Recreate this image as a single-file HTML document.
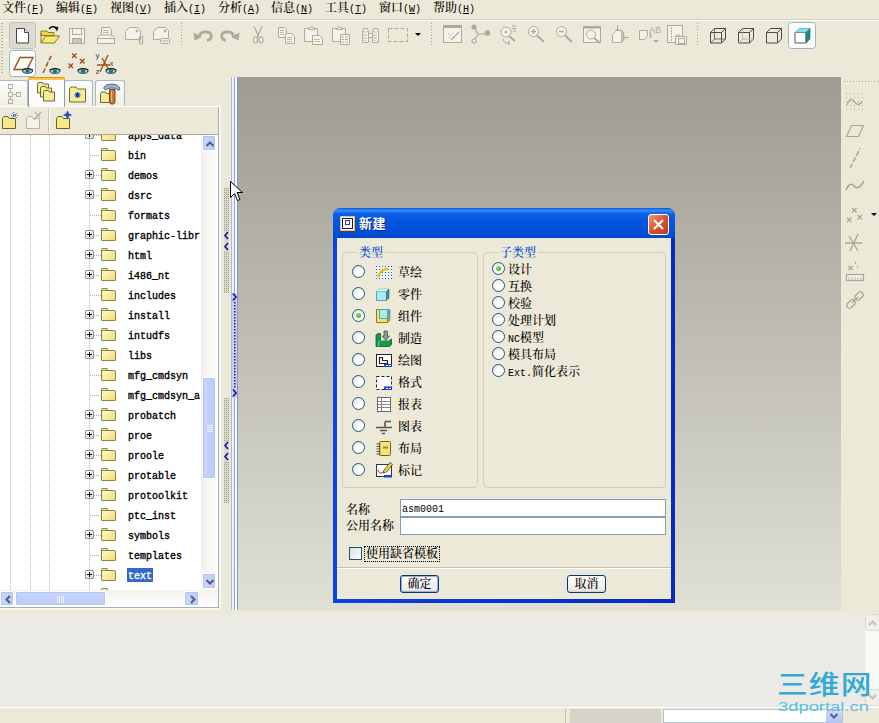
<!DOCTYPE html>
<html><head><meta charset="utf-8">
<style>
html,body{margin:0;padding:0;}
body{width:879px;height:723px;overflow:hidden;background:#ece9d8;position:relative;
 font-family:"Liberation Serif","Noto Serif CJK SC",serif;font-size:12px;font-weight:500;color:#000;}
.abs{position:absolute;}
.menu span{position:absolute;top:0px;white-space:nowrap;font-size:12px;line-height:16px;}
.menu u{text-decoration:underline;}
.menu b{font-weight:normal;font-family:"Liberation Mono",monospace;font-size:10px;}
#gfx{left:238px;top:77px;width:603px;height:534px;background:linear-gradient(#9e9c92,#e1e0d4);}
#msg{left:0;top:614px;width:879px;height:93px;background:#ebeae4;}
#status{left:0;top:707px;width:879px;height:16px;background:#ece9d8;border-top:1px solid #fff;}
.mono{font-family:"Liberation Mono",monospace;font-size:10px;}

.tab{background:linear-gradient(#fdfdfb,#f1efe4);border:1px solid #a9b7c9;border-bottom:none;border-radius:3px 3px 0 0;box-sizing:border-box}
#tree .row{position:absolute;left:0;width:201px;height:20px;}
#tree .row:before{content:"";position:absolute;left:90px;top:8px;width:11px;height:1px;background:repeating-linear-gradient(90deg,#b8b5a8 0 1px,#fff 1px 2px)}
#tree .vd{position:absolute;top:0;width:1px;height:455px;background:repeating-linear-gradient(#b8b5a8 0 1px,#fff 1px 2px);}
.pm{position:absolute;left:85px;top:3px;width:9px;height:9px;box-sizing:border-box;border:1px solid #8b9aa8;border-radius:1px;background:linear-gradient(135deg,#fff,#d9d6c8);}
.pm:before{content:"";position:absolute;left:1px;top:3px;width:5px;height:1px;background:#000}
.pm:after{content:"";position:absolute;left:3px;top:1px;width:1px;height:5px;background:#000}
.fd{position:absolute;left:101px;top:1px;width:15px;height:13px;}
.fd:before{content:"";position:absolute;left:0;top:0;width:7px;height:4px;border:1px solid #8a8440;border-bottom:none;border-radius:2px 2px 0 0;background:#f7efa6;box-sizing:border-box}
.fd:after{content:"";position:absolute;left:0;top:2px;width:15px;height:11px;border:1px solid #8a8440;border-radius:1px 2px 1px 1px;background:linear-gradient(135deg,#fdf8c4,#efe07c);box-sizing:border-box}
.nm{position:absolute;left:127px;top:2px;height:16px;line-height:16px;padding:0 1px;font-family:"Liberation Mono",monospace;font-size:10px;font-weight:normal;-webkit-text-stroke:0.35px #000;white-space:pre;color:#000}
.nm.sel{background:#316ac5;color:#fff;-webkit-text-stroke:0.35px #fff;top:1px;height:14px;line-height:18px;overflow:visible}
.sbtn{box-sizing:border-box;border:1px solid #fff;border-radius:2px;background:linear-gradient(90deg,#cbd7fc,#bdcbf7);box-shadow:0 0 0 1px #b5c4ee inset}

#dlg .grp{position:absolute;box-sizing:border-box;border:1px solid #d0d0bf;border-radius:4px}
#dlg .gl{position:absolute;background:#ece9d8;color:#0046d5;font-size:12px;line-height:16px;margin-top:1px;padding:0 2px;white-space:nowrap}
#dlg .lb{position:absolute;font-size:12px;line-height:16px;white-space:nowrap;margin-top:1px;margin-left:-1px}
#dlg .rd{position:absolute;width:13px;height:13px;box-sizing:border-box;border:1px solid #21557f;border-radius:50%;background:radial-gradient(circle at 65% 65%,#fff 30%,#dcdcd7)}
#dlg .rd.on:after{content:"";position:absolute;left:3px;top:3px;width:5px;height:5px;border-radius:50%;background:radial-gradient(circle at 35% 35%,#8fe070,#21a121)}
#dlg .inp{position:absolute;box-sizing:border-box;border:1px solid #7f9db9;background:#fff}
#dlg .btn{position:absolute;width:39px;height:18px;box-sizing:border-box;border:1px solid #003c74;border-radius:3px;background:linear-gradient(#fff,#ecebe5 85%,#d6d0c5);text-align:center;font-size:12px;line-height:17px}
</style></head><body>
<!-- menu -->
<div class="abs menu" style="left:0;top:0;width:879px;height:19px;">
<span style="left:2px">文件<b>(<u>F</u>)</b></span>
<span style="left:56px">编辑<b>(<u>E</u>)</b></span>
<span style="left:110px">视图<b>(<u>V</u>)</b></span>
<span style="left:164px">插入<b>(<u>I</u>)</b></span>
<span style="left:218px">分析<b>(<u>A</u>)</b></span>
<span style="left:271px">信息<b>(<u>N</u>)</b></span>
<span style="left:325px">工具<b>(<u>T</u>)</b></span>
<span style="left:379px">窗口<b>(<u>W</u>)</b></span>
<span style="left:433px">帮助<b>(<u>H</u>)</b></span>
</div>
<div class="abs" style="left:0;top:19px;width:879px;height:1px;background:#d8d2bd"></div>
<div class="abs" style="left:0;top:20px;width:879px;height:1px;background:#fff"></div>


<!-- toolbars -->
<svg class="abs" style="left:0;top:21px" width="879" height="57" viewBox="0 21 879 57" shape-rendering="auto">
<!-- grip dots -->
<g fill="#b5b09c">
<path d="M1,23h2v1h-2zM1,26h2v1h-2zM1,29h2v1h-2zM1,32h2v1h-2zM1,35h2v1h-2zM1,38h2v1h-2zM1,41h2v1h-2zM1,44h2v1h-2zM1,47h2v1h-2zM1,51h2v1h-2zM1,54h2v1h-2zM1,57h2v1h-2zM1,60h2v1h-2zM1,63h2v1h-2zM1,66h2v1h-2zM1,69h2v1h-2zM1,72h2v1h-2z"/>
</g>
<g stroke="#a9a592" stroke-width="1" stroke-dasharray="1 2">
<path d="M181.5,23v24M431.5,23v24M697.5,23v24"/>
</g>
<!-- New (pressed) -->
<rect x="9.5" y="22.5" width="26" height="26" rx="3" fill="#dddbd1" stroke="#c4c2b6"/>
<path d="M16.5,28.5h8l4,4v10.5h-12z" fill="#fff" stroke="#444" stroke-width="1"/>
<path d="M24.5,28.5v4h4" fill="#e8e8e8" stroke="#444" stroke-width="1"/>
<!-- Open -->
<path d="M41,31h6l1,1.5h6v3h-13z" fill="#e8d84e" stroke="#8a7a20" stroke-width="1"/>
<path d="M41,43V33M41,43l4.5,-7h14l-5,7z" fill="#f5ea6a" stroke="#8a7a20" stroke-width="1"/>
<path d="M49,29q3,-4 7,-1" fill="none" stroke="#111" stroke-width="1.4"/><path d="M54,26.500l4.500,0.500l-1.500,4.500z" fill="#111"/>
<!-- Save disabled -->
<g fill="none" stroke="#aeab9d" stroke-width="1">
<rect x="69.500" y="28.500" width="15" height="15" fill="#f4f2ea"/>
<rect x="72.500" y="28.500" width="9" height="6"/>
<rect x="72.500" y="38.500" width="9" height="5" fill="#c9c6b9"/>
</g>
<!-- Print disabled -->
<g fill="#f4f2ea" stroke="#aeab9d" stroke-width="1">
<path d="M101.500,36.500v-9h8l2,2v7z"/>
<path d="M97.500,43.500v-6l2.500,-2.500h12l2.500,2.500v6z"/>
<path d="M97.500,38.500h17" fill="none"/>
<path d="M103,30.500h6M103,32.500h6" fill="none" stroke-width="0.8"/>
</g>
<!-- tag1 disabled -->
<g fill="#f4f2ea" stroke="#aeab9d" stroke-width="1">
<path d="M125.500,39.500v-8l4,-4h8l3,3v9z"/>
<circle cx="137" cy="31" r="1" fill="#aeab9d"/>
<path d="M139.500,36.500v6a1.500,1.500 0 0 0 3,0v-7" fill="none" stroke-width="1.200"/>
</g>
<!-- tag2 disabled -->
<g fill="#f4f2ea" stroke="#aeab9d" stroke-width="1">
<path d="M153.500,39.500v-8l4,-4h8l3,3v9z"/>
<circle cx="165" cy="31" r="1" fill="#aeab9d"/>
<rect x="160.500" y="38.500" width="9" height="5" rx="1"/>
<path d="M162,41h6" fill="none"/>
</g>
<!-- undo / redo disabled -->
<g><path d="M199.500,36.500Q200,31.800 205.500,31.800Q211.300,31.800 211.300,36Q211.300,39.800 207,40.300" fill="none" stroke="#aeab9d" stroke-width="2.800"/><path d="M193.500,32.500l1,8l7.500,-3.500z" fill="#aeab9d"/></g>
<g transform="translate(433,0) scale(-1,1)"><path d="M199.500,36.500Q200,31.800 205.500,31.800Q211.300,31.800 211.300,36Q211.300,39.800 207,40.300" fill="none" stroke="#aeab9d" stroke-width="2.800"/><path d="M193.500,32.500l1,8l7.500,-3.500z" fill="#aeab9d"/></g>
<!-- scissors disabled -->
<g fill="none" stroke="#aeab9d" stroke-width="1.200">
<path d="M254,26.500l5,11M262,26.500l-5,11"/>
<ellipse cx="255.500" cy="40" rx="2" ry="3" fill="#f4f2ea"/><ellipse cx="261" cy="40" rx="2" ry="3" fill="#f4f2ea"/>
</g>
<!-- copy disabled -->
<g fill="#f4f2ea" stroke="#aeab9d" stroke-width="1">
<path d="M278.500,37.500v-10h6l2,2v8z"/>
<path d="M285.500,43.500v-10h6l3,3v7z"/>
<path d="M280,30.500h4M280,32.500h4M280,34.500h4M287,37.500h5M287,39.500h5M287,41.500h5" fill="none" stroke-width="0.800"/>
</g>
<!-- paste disabled -->
<g fill="#f4f2ea" stroke="#aeab9d" stroke-width="1">
<path d="M304.500,41.500v-13h13v13z"/>
<path d="M308.500,29.500l1.500,-2.500h3l1.500,2.500z"/>
<path d="M312.500,44.500v-9h7l3,3v6z"/>
<path d="M314,39.500h6M314,41.500h6" fill="none" stroke-width="0.800"/>
</g>
<!-- paste special disabled -->
<g fill="#f4f2ea" stroke="#aeab9d" stroke-width="1">
<path d="M332.500,41.500v-13h13v13z"/>
<path d="M336.500,29.500l1.500,-2.500h3l1.500,2.500z"/>
<path d="M340.500,44.500v-10h9v10z"/>
<path d="M342,37h2M345,37h3M342,39.500h2M345,39.500h3M342,42h2M345,42h3" fill="none"/>
</g>
<!-- binoculars disabled -->
<g fill="#f4f2ea" stroke="#aeab9d" stroke-width="1">
<path d="M362.500,42.500v-10l1,-4h4l1,4v10z"/>
<path d="M372.500,42.500v-10l1,-4h4l1,4v10z"/>
<path d="M368.500,33.500h4v4h-4z"/>
<path d="M364,31v10M366,31v10M374,31v10M376,31v10" fill="none" stroke-dasharray="2 1" stroke-width="0.800"/>
</g>
<!-- selection rect disabled -->
<rect x="388.500" y="28.500" width="19" height="13" fill="none" stroke="#aeab9d" stroke-dasharray="4 2"/>
<path d="M415,33h6l-3,3z" fill="#000"/>
<!-- icon: window w/ spray -->
<g fill="none" stroke="#aeab9d" stroke-width="1">
<rect x="443.500" y="25.500" width="18" height="17" fill="#f4f2ea"/>
<path d="M443.500,27h18" stroke-width="2"/>
<path d="M451,40l8,-8" stroke-width="1.500"/>
<path d="M448,33l1,1M450,35l1,1M452,33l1,1M449,37l1,1" />
</g>
<!-- branch icon -->
<g fill="none" stroke="#aeab9d" stroke-width="1.200">
<path d="M474,27q3,7 5,7h8M479,34q-3,2 -5,7"/>
<circle cx="474" cy="27" r="2" fill="#aeab9d"/><circle cx="487.500" cy="33" r="2.200" fill="#aeab9d"/><circle cx="474" cy="41" r="2" fill="#f4f2ea"/>
</g>
<!-- spin icon -->
<g fill="none" stroke="#aeab9d" stroke-width="1">
<circle cx="506" cy="32" r="5" fill="#f4f2ea"/><circle cx="506" cy="32" r="1" fill="#aeab9d"/>
<path d="M509,36l6,5" stroke-width="2"/>
<path d="M512,26h4M512,28.500h4M513,31h3"/>
<path d="M503,39q1,5 6,4" /><path d="M508,41l2,2l-2,2" />
</g>
<!-- zoom in -->
<g fill="none" stroke="#aeab9d" stroke-width="1">
<circle cx="533.500" cy="31.500" r="5" fill="#f4f2ea"/>
<path d="M531,31.500h5M533.500,29v5" stroke-width="1.500"/>
<path d="M537,35.500l7,6.500" stroke-width="2"/>
</g>
<!-- zoom out -->
<g fill="none" stroke="#aeab9d" stroke-width="1">
<circle cx="561.500" cy="31.500" r="5" fill="#f4f2ea"/>
<path d="M559,31.500h5" stroke-width="1.500"/>
<path d="M565,35.500l7,6.500" stroke-width="2"/>
</g>
<!-- refit -->
<g fill="none" stroke="#aeab9d" stroke-width="1">
<rect x="583.500" y="26.500" width="17" height="16" fill="#f4f2ea"/><path d="M583.500,27.500h17" stroke-width="2"/>
<circle cx="591" cy="34.500" r="4.500"/>
<path d="M594,38l6,5" stroke-width="2"/>
</g>
<!-- orient -->
<g fill="none" stroke="#aeab9d" stroke-width="1">
<path d="M612.500,42.500v-8l4,-4h5v12z" fill="#f4f2ea"/>
<path d="M621.500,30.500l2,2v8l-2,2" fill="#c9c6b9"/>
<path d="M617.500,25v6M615.500,29l2,2l2,-2M629,37.500h-6M625,35.500l-2,2l2,2"/>
</g>
<!-- named views -->
<g fill="none" stroke="#aeab9d" stroke-width="1">
<path d="M639.500,39.500v-9h8v5l-3,4z" fill="#f4f2ea"/>
<text x="649" y="32.500" font-family="Liberation Sans,sans-serif" font-size="9" fill="#aeab9d" stroke="none">AB</text>
<path d="M650.500,33v5" stroke-width="1.500"/>
<path d="M653,40h6l-3,3z" fill="#aeab9d" stroke="none"/>
</g>
<!-- layers -->
<g fill="none" stroke="#aeab9d" stroke-width="1">
<rect x="667.500" y="25.500" width="15" height="17" fill="#f4f2ea"/>
<path d="M671.500,27v15" stroke-dasharray="2 1"/>
<rect x="675.500" y="36.500" width="11" height="8" fill="#f4f2ea"/>
<rect x="678.500" y="38.500" width="6" height="5"/>
<path d="M675.500,36.500l1,-1.500h3l1,1.500"/>
</g>
<!-- cubes -->
<g transform="translate(718,36)"><g fill="none" stroke="#3a3a3a" stroke-width="0.900"><path d="M-7.500,-3.500h11v10.500h-11z"/><path d="M-7.500,-3.500l4,-4h11l-4,4M7.500,-7.500v10.500l-4,4"/></g><path d="M-3.500,-7.500v10.500h11M-3.500,3l-4,4" fill="none" stroke="#555" stroke-width="0.800"/></g>
<g transform="translate(746,36)"><g fill="none" stroke="#3a3a3a" stroke-width="0.900"><path d="M-7.500,-3.500h11v10.500h-11z"/><path d="M-7.500,-3.500l4,-4h11l-4,4M7.500,-7.500v10.500l-4,4"/></g><path d="M-3.500,-7.500v10.500h11M-3.500,3l-4,4" fill="none" stroke="#b0b0a8" stroke-width="0.800"/></g>
<g transform="translate(774,36)"><g fill="none" stroke="#3a3a3a" stroke-width="0.900"><path d="M-7.500,-3.500h11v10.500h-11z"/><path d="M-7.500,-3.500l4,-4h11l-4,4M7.500,-7.500v10.500l-4,4"/></g></g>
<rect x="788.500" y="22.500" width="27" height="26" rx="3" fill="#fbfbf8" stroke="#9db4cc"/>
<g transform="translate(802.500,36)">
<path d="M-7.500,-3.500h11v10.500h-11z" fill="#fff" stroke="#444" stroke-width="0.900"/>
<path d="M-7.500,-3.500l4,-4h11l-4,4z" fill="#7fe0e6" stroke="#4a9aa0" stroke-width="0.600"/>
<path d="M3.500,-3.500l4,-4v10.500l-4,4z" fill="#1e8a86" stroke="#1e6a66" stroke-width="0.600"/>
</g>
<!-- Row 2 -->
<rect x="9.500" y="50.500" width="26" height="26" rx="3" fill="#fbfbf8" stroke="#9db4cc"/>
<path d="M14,69.500l6,-12h13l-6,12z" fill="none" stroke="#a0501e" stroke-width="1.400"/>
<g transform="translate(27.500,71)"><ellipse cx="0" cy="0" rx="5" ry="2.300" fill="#9ccac4" stroke="#223" stroke-width="0.900"/><circle cx="0" cy="0" r="2" fill="#0a7a76"/><path d="M-5.500,-1.200 Q0,-4.200 5.500,-1.200" fill="none" stroke="#222" stroke-width="1"/></g>
<path d="M43,73l9,-19" fill="none" stroke="#a0501e" stroke-width="1.500" stroke-dasharray="5 2"/>
<g transform="translate(55,71)"><ellipse cx="0" cy="0" rx="5" ry="2.300" fill="#9ccac4" stroke="#223" stroke-width="0.900"/><circle cx="0" cy="0" r="2" fill="#0a7a76"/><path d="M-5.500,-1.200 Q0,-4.200 5.500,-1.200" fill="none" stroke="#222" stroke-width="1"/></g>
<g fill="none" stroke="#a0501e" stroke-width="1.400">
<path d="M72,53.500l4.500,4.500M76.500,53.500l-4.500,4.500M80,59l4.500,4.500M84.500,59l-4.500,4.500M68.500,63.500l4.500,4.500M73,63.500l-4.500,4.500"/>
</g>
<g transform="translate(83,71)"><ellipse cx="0" cy="0" rx="5" ry="2.300" fill="#9ccac4" stroke="#223" stroke-width="0.900"/><circle cx="0" cy="0" r="2" fill="#0a7a76"/><path d="M-5.500,-1.200 Q0,-4.200 5.500,-1.200" fill="none" stroke="#222" stroke-width="1"/></g>
<g fill="none" stroke="#a0501e" stroke-width="1.400">
<path d="M97,65h13M108,55l-8,17M102,58l7,12"/>
</g>
<g font-family="Liberation Sans,sans-serif" font-size="8" fill="#444"><text x="95.500" y="58">y</text><text x="95.500" y="73.500">z</text><text x="109.500" y="66">x</text></g>
<g transform="translate(111,71)"><ellipse cx="0" cy="0" rx="5" ry="2.300" fill="#9ccac4" stroke="#223" stroke-width="0.900"/><circle cx="0" cy="0" r="2" fill="#0a7a76"/><path d="M-5.500,-1.200 Q0,-4.200 5.500,-1.200" fill="none" stroke="#222" stroke-width="1"/></g>
</svg>


<!-- tabs -->
<div class="abs" style="left:0;top:106px;width:221px;height:1px;background:#fff"></div>
<div class="abs tab" style="left:0;top:80px;width:28px;height:26px;border-left:none;border-radius:0 3px 0 0"></div>
<div class="abs tab" style="left:64px;top:80px;width:29px;height:26px;"></div>
<div class="abs tab" style="left:95px;top:80px;width:30px;height:26px;"></div>
<div class="abs" style="left:28px;top:77px;width:35px;height:30px;background:#fcfcfe;border:1px solid #919b9c;border-bottom:none;border-top:none;border-radius:3px 3px 0 0"></div>
<div class="abs" style="left:28px;top:77px;width:37px;height:3px;background:#ffc73c;border-radius:3px 3px 0 0;border-top:1px solid #e68b2c;box-sizing:border-box"></div>
<svg class="abs" style="left:0;top:77px" width="130" height="60" viewBox="0 77 130 60">
<!-- tree tab icon (disabled) -->
<g fill="#f6f5ee" stroke="#b4b1a3" stroke-width="1"><path d="M10.500,88v13M10.500,94.500h8" fill="none"/><rect x="8.500" y="84.500" width="4" height="4"/><rect x="8.500" y="92.500" width="4" height="4"/><rect x="8.500" y="99.500" width="4" height="4"/><rect x="16.500" y="92.500" width="4" height="4"/></g>
<!-- folders tab icon -->
<g fill="#f5ec96" stroke="#5e5a28" stroke-width="0.900" transform="translate(0,-2.500)">
<path d="M37.500,95.500v-9l1,-1.500h4l1,1.500h5v9z"/>
<path d="M40.500,99.500v-9l1,-1.500h4l1,1.500h5v9z"/>
<path d="M43.500,103.500v-9l1,-1.500h4l1,1.500h5v9z"/>
</g>
<!-- favorites -->
<g transform="translate(0,-2.500)">
<path d="M69.500,104.500v-13l1.500,-2h5l1.500,2h8v13z" fill="#f5ec96" stroke="#5e5a28" stroke-width="0.900"/>
<path d="M77.500,94.500v6M74.500,97.500h6M75.500,95.500l4,4M79.500,95.500l-4,4" stroke="#1030d0" stroke-width="1.100" fill="none"/>
</g>
<!-- connections -->
<path d="M100.500,102.500v-9l1,-1.500h4l1,1.500h4v9z" fill="#f5ec96" stroke="#5e5a28" stroke-width="0.900"/>
<path d="M103.500,88q2,-4 8,-4q6,0 8.500,4l-1,2.500q-3,-3 -7.500,-2.500q-4,0 -6,2z" fill="#9fb6d8" stroke="#33466a" stroke-width="0.800"/>
<path d="M109.500,89.500h5.500v12a2.700,2.700 0 0 1 -5.500,0z" fill="#cf7a2c" stroke="#5a2c0c" stroke-width="0.800"/>
<path d="M111.500,91v10" stroke="#f0b070" stroke-width="1"/>
</svg>
<!-- panel toolbar -->
<div class="abs" style="left:0;top:107px;width:218px;height:27px;background:#ece9d8;border-right:1px solid #c5c2b2"></div>
<div class="abs" style="left:0;top:134px;width:219px;height:1px;background:#aca899"></div>
<div class="abs" style="left:48px;top:109px;width:1px;height:24px;background:#c5c2b2"></div>
<div class="abs" style="left:49px;top:109px;width:1px;height:24px;background:#fff"></div>
<svg class="abs" style="left:0;top:107px" width="100" height="27" viewBox="0 107 100 27">
<path d="M2.500,128.500v-10l1.500,-2h4l1.500,2h6v10z" fill="#f3e88a" stroke="#6b6420"/>
<path d="M14,112v7M11,115.500h7M12,113l5,5M17,113l-5,5" stroke="#1030a0" stroke-width="0.800" fill="none" stroke-dasharray="1 1"/>
<path d="M26.500,128.500v-10l1.500,-2h4l1.500,2h6v10z" fill="#f4f2ea" stroke="#b4b1a3"/>
<path d="M34,120l7,-8M35,112l5,5" stroke="#b4b1a3" stroke-width="1.300" fill="none"/>
<path d="M56.500,128.500v-10l1.500,-2h4l1.500,2h6v10z" fill="#f3e88a" stroke="#6b6420"/>
<path d="M67.500,111l1.200,2.800l2.800,1.200l-2.800,1.200l-1.200,2.800l-1.200,-2.800l-2.800,-1.200l2.800,-1.200z" fill="#2050e0" stroke="#1030a0" stroke-width="0.500"/>
</svg>
<!-- tree -->
<div id="tree" class="abs" style="left:0;top:135px;width:201px;height:455px;background:#fff;overflow:hidden">
<i class="vd" style="left:10px"></i><i class="vd" style="left:30px"></i><i class="vd" style="left:49px"></i><i class="vd" style="left:89px"></i>
<div class="row" style="top:-8px"><i class="pm"></i><i class="fd"></i><span class="nm">apps_data</span></div>
<div class="row" style="top:12px"><i class="fd"></i><span class="nm">bin</span></div>
<div class="row" style="top:32px"><i class="pm"></i><i class="fd"></i><span class="nm">demos</span></div>
<div class="row" style="top:52px"><i class="pm"></i><i class="fd"></i><span class="nm">dsrc</span></div>
<div class="row" style="top:72px"><i class="fd"></i><span class="nm">formats</span></div>
<div class="row" style="top:92px"><i class="pm"></i><i class="fd"></i><span class="nm">graphic-libr</span></div>
<div class="row" style="top:112px"><i class="pm"></i><i class="fd"></i><span class="nm">html</span></div>
<div class="row" style="top:132px"><i class="pm"></i><i class="fd"></i><span class="nm">i486_nt</span></div>
<div class="row" style="top:152px"><i class="fd"></i><span class="nm">includes</span></div>
<div class="row" style="top:172px"><i class="pm"></i><i class="fd"></i><span class="nm">install</span></div>
<div class="row" style="top:192px"><i class="pm"></i><i class="fd"></i><span class="nm">intudfs</span></div>
<div class="row" style="top:212px"><i class="pm"></i><i class="fd"></i><span class="nm">libs</span></div>
<div class="row" style="top:232px"><i class="fd"></i><span class="nm">mfg_cmdsyn</span></div>
<div class="row" style="top:252px"><i class="fd"></i><span class="nm">mfg_cmdsyn_a</span></div>
<div class="row" style="top:272px"><i class="pm"></i><i class="fd"></i><span class="nm">probatch</span></div>
<div class="row" style="top:292px"><i class="pm"></i><i class="fd"></i><span class="nm">proe</span></div>
<div class="row" style="top:312px"><i class="pm"></i><i class="fd"></i><span class="nm">proole</span></div>
<div class="row" style="top:332px"><i class="pm"></i><i class="fd"></i><span class="nm">protable</span></div>
<div class="row" style="top:352px"><i class="pm"></i><i class="fd"></i><span class="nm">protoolkit</span></div>
<div class="row" style="top:372px"><i class="fd"></i><span class="nm">ptc_inst</span></div>
<div class="row" style="top:392px"><i class="pm"></i><i class="fd"></i><span class="nm">symbols</span></div>
<div class="row" style="top:412px"><i class="fd"></i><span class="nm">templates</span></div>
<div class="row" style="top:432px"><i class="pm"></i><i class="fd"></i><span class="nm sel">text</span></div>
<div class="row" style="top:452px"><i class="fd"></i></div>
</div>
<!-- v scrollbar -->
<div class="abs" style="left:201px;top:135px;width:17px;height:455px;background:linear-gradient(90deg,#f3f1ec,#fefefb)"></div>
<div class="abs sbtn" style="left:202px;top:135px;width:14px;height:16px;"><svg width="14" height="16"><path d="M3.500,10l3.500,-3.500l3.500,3.500" fill="none" stroke="#4d6185" stroke-width="2"/></svg></div>
<div class="abs sbtn" style="left:202px;top:573px;width:14px;height:16px;"><svg width="14" height="16"><path d="M3.500,6l3.500,3.500l3.500,-3.500" fill="none" stroke="#4d6185" stroke-width="2"/></svg></div>
<div class="abs sbtn" style="left:202px;top:377px;width:14px;height:102px;background:linear-gradient(90deg,#c9d5fb,#bccbf8)"><svg width="14" height="101"><path d="M4,47.500h6M4,49.500h6M4,51.500h6M4,53.500h6" stroke="#eef3ff" stroke-width="1"/></svg></div>
<!-- h scrollbar -->
<div class="abs" style="left:0;top:590px;width:218px;height:17px;background:linear-gradient(#f3f1ec,#fefefb)"></div>
<div class="abs sbtn" style="left:0px;top:591px;width:14px;height:15px;"><svg width="14" height="15"><path d="M9,4l-3.500,3.500l3.500,3.500" fill="none" stroke="#4d6185" stroke-width="2"/></svg></div>
<div class="abs sbtn" style="left:184px;top:591px;width:15px;height:15px;"><svg width="15" height="15"><path d="M6,4l3.500,3.500l-3.500,3.500" fill="none" stroke="#4d6185" stroke-width="2"/></svg></div>
<div class="abs sbtn" style="left:15px;top:591px;width:91px;height:15px;background:linear-gradient(#c9d5fb,#bccbf8)"><svg width="89" height="15"><path d="M41.500,4v7M43.500,4v7M45.500,4v7M47.500,4v7" stroke="#eef3ff" stroke-width="1"/></svg></div>
<!-- panel borders -->
<div class="abs" style="left:218px;top:107px;width:1px;height:502px;background:#9fb0c8"></div>
<div class="abs" style="left:219px;top:107px;width:2px;height:502px;background:#f7f6f0"></div>
<div class="abs" style="left:0;top:607px;width:219px;height:1px;background:#9fb0c8"></div>
<div class="abs" style="left:0;top:608px;width:221px;height:2px;background:#f7f6f0"></div>
<!-- sash -->
<div class="abs" style="left:231px;top:77px;width:7px;height:533px;background:linear-gradient(90deg,#a9b8e6 0 1px,#eef1fa 1px 3px,#8fa3dd 3px 4px,#fbfcff 4px 6px,#7f96d8 6px 7px)"></div>
<svg class="abs" style="left:222px;top:180px" width="16" height="330" viewBox="222 180 16 330">
<defs><pattern id="dots" x="224" y="188" width="2" height="2" patternUnits="userSpaceOnUse"><rect width="2" height="2" fill="#dcd9cb"/><rect width="1" height="1" fill="#a09d8e"/></pattern>
<pattern id="bdots" x="233" y="302" width="4" height="3" patternUnits="userSpaceOnUse"><rect x="1" y="0" width="1.500" height="1.500" fill="#20208a"/></pattern></defs>
<rect x="224" y="188" width="5" height="105" fill="url(#dots)"/>
<rect x="224" y="398" width="5" height="105" fill="url(#dots)"/>
<rect x="224" y="231" width="5" height="20" fill="#dcd9cb"/>
<rect x="224" y="441" width="5" height="20" fill="#dcd9cb"/>
<rect x="232" y="293" width="5" height="105" fill="#c9cfe6"/>
<rect x="233" y="302" width="4" height="87" fill="url(#bdots)"/>
<g fill="none" stroke="#15159a" stroke-width="1.600">
<path d="M228,232l-3,3.500l3,3.500M228,243l-3,3.500l3,3.500M228,442l-3,3.500l3,3.500M228,453l-3,3.500l3,3.500"/>
<path d="M233,293.500l3,3.500l-3,3.500M233,389.500l3,3.500l-3,3.500"/>
</g>
</svg>

<!-- graphics area -->
<div id="gfx" class="abs"></div>
<!-- message area -->
<div id="msg" class="abs"></div>
<div id="status" class="abs"></div>

<!-- right toolbar -->
<svg class="abs" style="left:842px;top:77px" width="37" height="240" viewBox="842 77 37 240">
<defs><pattern id="gd" x="846" y="93" width="4" height="4" patternUnits="userSpaceOnUse"><rect width="1" height="1" fill="#aeab9d"/></pattern></defs>
<path d="M844,81.500h35" stroke="#a9a592" stroke-dasharray="1 2"/>
<rect x="846" y="93" width="18" height="18" fill="url(#gd)"/>
<g fill="none" stroke="#a9a698" stroke-width="1.200">
<path d="M847,105q3,-9 7,-3.500t8,0.500" stroke-width="1.400"/>
<path d="M846.500,136.500l5,-11h12l-5,11z"/>
<path d="M850,168l10,-19.500" stroke-dasharray="5 2" stroke-width="1.600"/>
<path d="M846,190q4,-9 8,-4t10,-5" stroke-width="1.600"/>
<path d="M852,208l4.500,4.500M856.500,208l-4.500,4.500M857.500,215l4.500,4.500M862,215l-4.500,4.500M847,217.500l4.500,4.500M851.500,217.500l-4.500,4.500"/>
<path d="M845,243h17M858,234l-8,17M849,236l9,15" stroke-width="1.300"/>
<path d="M848.500,266l4,4M852.500,266l-4,4M855,262l1,2M857,266l1,2" />
<rect x="846.500" y="274.500" width="17" height="6" fill="#f4f2ea"/>
<path d="M849,277v3M852,277v3M855,277v3M858,277v3M861,277v3" stroke-width="0.800"/>
<path d="M847,304l4,-4a3,3 0 0 1 4,4l-4,4a3,3 0 0 1 -4,-4zM855,296l4,-4a3,3 0 0 1 4,4l-4,4a3,3 0 0 1 -4,-4zM852,303l6,-6" stroke-width="1.300"/>
</g>
<path d="M871,213h6l-3,3z" fill="#000"/>
</svg>
<!-- message scroll -->
<div class="abs" style="left:865px;top:614px;width:14px;height:93px;background:#f9f8f4"></div>
<svg class="abs" style="left:865px;top:614px" width="14" height="93"><g fill="#f0efe8" stroke="#dcdad0"><rect x="0.500" y="0.500" width="14" height="16" rx="2"/><rect x="0.500" y="75.500" width="14" height="16" rx="2"/></g><path d="M4,11l3.500,-3.500l3.500,3.500M4,81l3.500,3.500l3.500,-3.500" fill="none" stroke="#c4c2b8" stroke-width="1.800"/></svg>
<!-- status bar panels -->
<div class="abs" style="left:565px;top:708px;width:1px;height:15px;background:#c5c2b2"></div>
<div class="abs" style="left:570px;top:709px;width:91px;height:14px;background:#d6d3ca"></div>
<div class="abs" style="left:663px;top:709px;width:180px;height:14px;background:#fff;border:1px solid #b9c3d3;box-sizing:border-box"></div>
<div class="abs" style="left:826px;top:710px;width:16px;height:13px;background:linear-gradient(#cdd9fc,#b4c4f3);border-radius:2px"></div>
<svg class="abs" style="left:826px;top:710px" width="16" height="13"><path d="M4.500,4l3.500,3.500l3.500,-3.500" fill="none" stroke="#4d6185" stroke-width="2"/></svg>
<!-- cursor -->
<svg class="abs" style="left:229px;top:180px" width="16" height="24" viewBox="0 0 16 24"><path d="M1.500,1.500v16l4,-4l3,7l2.500,-1l-3,-7h5.500z" fill="#fff" stroke="#000" stroke-width="1"/></svg>
<!-- watermark -->
<div class="abs" style="left:777px;top:668px;width:100px;height:34px;font-family:'Liberation Sans','Noto Sans CJK SC',sans-serif;font-size:26px;line-height:34px;font-weight:500;color:#30aad6;white-space:nowrap;letter-spacing:1px;transform:scaleX(1.180);transform-origin:0 0">三维网</div>
<div id="wm2" class="abs" style="left:778px;top:700px;height:14px;font-family:'Liberation Sans',sans-serif;font-size:12px;line-height:14px;color:#55c0e4;white-space:nowrap;transform:scaleX(1.530);transform-origin:0 0">3dportal.cn</div>

<div id="dlg" class="abs" style="left:333px;top:208px;width:342px;height:395px;">
<div class="abs" style="left:0;top:0;width:342px;height:395px;background:linear-gradient(90deg,#0a44e2,#0831d9 50%,#062bbd);border-radius:8px 8px 0 0;"></div>
<div class="abs" style="left:0;top:0;width:342px;height:30px;border-radius:8px 8px 0 0;background:linear-gradient(#0058e6 0,#3a8cf8 8%,#0a5fe8 20%,#0354dd 50%,#0250d8 80%,#0348cc 100%);"></div>
<div class="abs" style="left:4px;top:30px;width:334px;height:361px;background:#ece9d8;"></div>
<!-- title icon -->
<div class="abs" style="left:7px;top:8px;width:15px;height:15px;background:#fff;border:1px solid #c8c4bc;box-sizing:border-box;box-shadow:1px 1px 0 #803020"></div>
<div class="abs" style="left:9px;top:10px;width:11px;height:11px;border:1px solid #223;box-sizing:border-box;background:#fff"></div>
<div class="abs" style="left:12px;top:12px;width:5px;height:5px;border:1px solid #2040b0;box-sizing:border-box"></div>
<div class="abs" style="left:26px;top:8px;font-family:'Liberation Sans','Noto Sans CJK SC',sans-serif;font-weight:bold;font-size:13px;line-height:16px;color:#fff;text-shadow:1px 1px 0 #0a2a8a;letter-spacing:0.5px">新建</div>
<!-- close -->
<div class="abs" style="left:315px;top:6px;width:21px;height:21px;border:1px solid #fff;border-radius:3px;box-sizing:border-box;background:linear-gradient(135deg,#ec9a7c,#d8532a 50%,#bc3a1a)"></div>
<svg class="abs" style="left:315px;top:6px" width="21" height="21"><path d="M6,6l9,9M15,6l-9,9" stroke="#fff" stroke-width="2.300"/></svg>
<!-- groups -->
<div class="grp" style="left:9px;top:44px;width:136px;height:236px"></div>
<div class="grp" style="left:150px;top:44px;width:183px;height:236px"></div>
<span class="gl" style="left:24px;top:36px">类型</span>
<span class="gl" style="left:165px;top:36px">子类型</span>
<i class="rd" style="left:19px;top:57.0px"></i><span class="lb" style="left:66px;top:56.0px">草绘</span>
<i class="rd" style="left:19px;top:79.0px"></i><span class="lb" style="left:66px;top:78.0px">零件</span>
<i class="rd on" style="left:19px;top:101.0px"></i><span class="lb" style="left:66px;top:100.0px">组件</span>
<i class="rd" style="left:19px;top:123.0px"></i><span class="lb" style="left:66px;top:122.0px">制造</span>
<i class="rd" style="left:19px;top:145.0px"></i><span class="lb" style="left:66px;top:144.0px">绘图</span>
<i class="rd" style="left:19px;top:167.0px"></i><span class="lb" style="left:66px;top:166.0px">格式</span>
<i class="rd" style="left:19px;top:189.0px"></i><span class="lb" style="left:66px;top:188.0px">报表</span>
<i class="rd" style="left:19px;top:211.0px"></i><span class="lb" style="left:66px;top:210.0px">图表</span>
<i class="rd" style="left:19px;top:233.0px"></i><span class="lb" style="left:66px;top:232.0px">布局</span>
<i class="rd" style="left:19px;top:255.0px"></i><span class="lb" style="left:66px;top:254.0px">标记</span>
<i class="rd on" style="left:159px;top:54.0px"></i><span class="lb" style="left:176px;top:53.0px">设计</span>
<i class="rd" style="left:159px;top:71.0px"></i><span class="lb" style="left:176px;top:70.0px">互换</span>
<i class="rd" style="left:159px;top:88.0px"></i><span class="lb" style="left:176px;top:87.0px">校验</span>
<i class="rd" style="left:159px;top:105.0px"></i><span class="lb" style="left:176px;top:104.0px">处理计划</span>
<i class="rd" style="left:159px;top:122.0px"></i><span class="lb" style="left:176px;top:121.0px"><span class="mono">NC</span>模型</span>
<i class="rd" style="left:159px;top:139.0px"></i><span class="lb" style="left:176px;top:138.0px">模具布局</span>
<i class="rd" style="left:159px;top:156.0px"></i><span class="lb" style="left:176px;top:155.0px"><span class="mono">Ext.</span>简化表示</span>

<!-- type icons -->
<svg class="abs" style="left:40px;top:54px" width="22" height="224" viewBox="373 262 22 224">
<defs><pattern id="sk" x="376" y="266" width="3" height="3" patternUnits="userSpaceOnUse"><rect width="3" height="3" fill="#eef4ff"/><rect width="1" height="1" fill="#3050b0"/></pattern></defs>
<rect x="376" y="266" width="16" height="13" fill="url(#sk)"/>
<path d="M378.500,277.500q1,-8.500 10,-8.500" fill="none" stroke="#e8c020" stroke-width="2.600"/>
<g transform="translate(0,22)"><path d="M376.500,269.500h10v9h-10z" fill="#a8ecf2" stroke="#5aa0a6"/><path d="M376.500,269.500l2.500,-2.500h10l-2.500,2.500z" fill="#dcfbff" stroke="#6ab0b6" stroke-width="0.600"/><path d="M386.500,269.500l2.500,-2.500v9l-2.500,2.500z" fill="#3a9296" stroke="#2a7276" stroke-width="0.600"/></g>
<g transform="translate(0,44)"><path d="M376.500,265.500h11v13h-11z" fill="#f6e468" stroke="#8a7a20"/><path d="M387.500,268l2.500,-2v10.500l-2.500,2z" fill="#e09a20" stroke="#8a6a10" stroke-width="0.500"/><path d="M379.500,265.500h10v9h-10z" fill="#a8ecf2" stroke="#5aa0a6"/><path d="M388,266v8" stroke="#3a9296" stroke-width="1.500"/></g>
<g transform="translate(0,66)"><path d="M376,269l2,-1.500h2.500v7h8.500l2.500,-1.500v5.500l-2,2h-13.500z" fill="#169a4a" stroke="#0a5a28" stroke-width="0.800"/><path d="M380.500,274.500l-2,2v4M380.500,274.500h9" fill="none" stroke="#7adfa0" stroke-width="0.800"/><path d="M384,265h3.500v5h2l-3.700,4.500l-3.700,-4.500h2z" fill="#8a9a96" stroke="#3a4a46" stroke-width="0.700"/></g>
<g transform="translate(0,88)"><rect x="376.500" y="266.500" width="15" height="12" fill="#fff" stroke="#223"/><path d="M379.500,269.500h3v3h5v3h-8z" fill="none" stroke="#223" stroke-width="1.200"/><rect x="384" y="276" width="8" height="3" fill="#2040d0"/><path d="M386,277.500h2M389,277.500h2" stroke="#fff" stroke-width="1"/></g>
<g transform="translate(0,110)"><rect x="376.500" y="266.500" width="15" height="13" fill="#fff" stroke="#223" stroke-dasharray="3 2"/><rect x="384" y="276.500" width="8" height="3.500" fill="#2040d0"/><path d="M386,278.500h2M389,278.500h2" stroke="#fff" stroke-width="1"/></g>
<g transform="translate(1,132)"><rect x="376.500" y="265.500" width="13" height="14" fill="#fff" stroke="#666"/><path d="M377,269.500h12M377,272.500h12M377,275.500h12M380.500,266v13" stroke="#888" fill="none"/></g>
<g transform="translate(0,154)"><path d="M376,273.500h16M385,267.500v6M385,267.500h6M380,276.500h7M382,279.500h3" stroke="#555" stroke-width="1.600" fill="none"/></g>
<g transform="translate(0,176)"><rect x="379.500" y="265.500" width="11" height="14" rx="1" fill="#f2e66e" stroke="#6a6420"/><path d="M376.500,268h4M376.500,270.500h4M376.500,273h4M376.500,275.500h4M376.500,278h4" stroke="#444" stroke-width="0.900"/><path d="M383,271.500h5" stroke="#8a8a5a" stroke-width="2"/></g>
<g transform="translate(0,198)"><rect x="376.500" y="266.500" width="15" height="12" fill="#fff" stroke="#334"/><path d="M378,272q2,6 6,1" fill="none" stroke="#c02020"/><path d="M383,275l1,-3l6,-7.500l2.500,2l-6,7.500z" fill="#f0d048" stroke="#443" stroke-width="0.800"/><rect x="384" y="277" width="8" height="2.500" fill="#2040d0"/></g>
</svg>

<!-- fields -->
<span class="lb" style="left:14px;top:293px">名称</span>
<span class="lb" style="left:14px;top:309px">公用名称</span>
<div class="inp" style="left:67px;top:291px;width:266px;height:18px"><span style="position:absolute;left:1px;top:3px;font-family:'Liberation Mono',monospace;font-size:10px;line-height:14px;">asm0001</span></div>
<div class="inp" style="left:67px;top:309px;width:266px;height:18px"></div>
<div class="abs" style="left:16px;top:339px;width:13px;height:13px;box-sizing:border-box;border:1px solid #1c5180;background:linear-gradient(135deg,#dcdcd7,#fff)"></div>
<span class="lb" style="left:32px;top:337px;padding:0 1px;border:1px dotted #000;line-height:14px">使用缺省模板</span>
<div class="abs" style="left:4px;top:359px;width:334px;height:1px;background:#c5c2b2"></div>
<div class="abs" style="left:4px;top:360px;width:334px;height:1px;background:#fff"></div>
<div class="btn" style="left:67px;top:367px;box-shadow:0 0 0 1px #98b0e8 inset">确定</div>
<div class="btn" style="left:234px;top:367px">取消</div>
</div>

</body></html>
